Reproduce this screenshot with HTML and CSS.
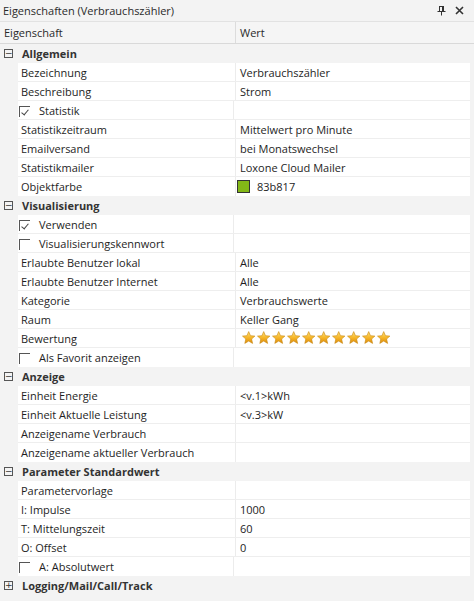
FILE: index.html
```html
<!DOCTYPE html>
<html lang="de">
<head>
<meta charset="utf-8">
<title>Eigenschaften</title>
<link rel="stylesheet" href="styles.css">
</head>
<body>
<div class="panel">
  <div class="titlebar">
    <span class="title">Eigenschaften (Verbrauchszähler)</span>
    <span class="tools">
      <svg class="pin" width="9" height="10" viewBox="0 0 9 10"><path d="M2 0.5h5M2.5 0.5v5M6.5 0.5v5M5.5 0.5v5M0.5 5.5h8M4.5 5.5v4" stroke="#333" stroke-width="1" fill="none"/></svg>
      <svg class="close" width="9" height="9" viewBox="0 0 9 9"><path d="M1 1l7 7M8 1l-7 7" stroke="#333" stroke-width="1.6" fill="none"/></svg>
    </span>
  </div>
  <div class="header">
    <div class="hcell hname">Eigenschaft</div>
    <div class="hcell hval">Wert</div>
  </div>
  <div class="grid">
    <div class="group"><span class="tog">−</span><span class="gname">Allgemein</span></div>
    <div class="row"><div class="name">Bezeichnung</div><div class="val">Verbrauchszähler</div></div>
    <div class="row"><div class="name">Beschreibung</div><div class="val">Strom</div></div>
    <div class="row"><div class="name chk"><span class="cb on"></span>Statistik</div><div class="val"></div></div>
    <div class="row"><div class="name">Statistikzeitraum</div><div class="val">Mittelwert pro Minute</div></div>
    <div class="row"><div class="name">Emailversand</div><div class="val">bei Monatswechsel</div></div>
    <div class="row"><div class="name">Statistikmailer</div><div class="val">Loxone Cloud Mailer</div></div>
    <div class="row"><div class="name">Objektfarbe</div><div class="val"><span class="swatch"></span>83b817</div></div>

    <div class="group"><span class="tog">−</span><span class="gname">Visualisierung</span></div>
    <div class="row"><div class="name chk"><span class="cb on"></span>Verwenden</div><div class="val"></div></div>
    <div class="row"><div class="name chk"><span class="cb"></span>Visualisierungskennwort</div><div class="val"></div></div>
    <div class="row"><div class="name">Erlaubte Benutzer lokal</div><div class="val">Alle</div></div>
    <div class="row"><div class="name">Erlaubte Benutzer Internet</div><div class="val">Alle</div></div>
    <div class="row"><div class="name">Kategorie</div><div class="val">Verbrauchswerte</div></div>
    <div class="row"><div class="name">Raum</div><div class="val">Keller Gang</div></div>
    <div class="row"><div class="name">Bewertung</div><div class="val stars">
      <svg width="152" height="14" viewBox="0 0 152 14">
        <defs>
          <linearGradient id="g" x1="0" y1="0" x2="0" y2="1">
            <stop offset="0" stop-color="#ffe27a"/>
            <stop offset="0.55" stop-color="#f5b324"/>
            <stop offset="1" stop-color="#d98a10"/>
          </linearGradient>
          <path id="s" d="M6.7 0.6l1.8 4.1 4.4 0.4-3.3 2.9 1 4.4-3.9-2.3-3.9 2.3 1-4.4-3.3-2.9 4.4-0.4z" fill="url(#g)" stroke="#c8860e" stroke-width="0.6"/>
        </defs>
        <use href="#s" x="0"/><use href="#s" x="15"/><use href="#s" x="30"/><use href="#s" x="45"/><use href="#s" x="60"/><use href="#s" x="75"/><use href="#s" x="90"/><use href="#s" x="105"/><use href="#s" x="120"/><use href="#s" x="135"/>
      </svg>
    </div></div>
    <div class="row"><div class="name chk"><span class="cb"></span>Als Favorit anzeigen</div><div class="val"></div></div>

    <div class="group"><span class="tog">−</span><span class="gname">Anzeige</span></div>
    <div class="row"><div class="name">Einheit Energie</div><div class="val">&lt;v.1&gt;kWh</div></div>
    <div class="row"><div class="name">Einheit Aktuelle Leistung</div><div class="val">&lt;v.3&gt;kW</div></div>
    <div class="row"><div class="name">Anzeigename Verbrauch</div><div class="val"></div></div>
    <div class="row"><div class="name">Anzeigename aktueller Verbrauch</div><div class="val"></div></div>

    <div class="group"><span class="tog">−</span><span class="gname">Parameter Standardwert</span></div>
    <div class="row"><div class="name">Parametervorlage</div><div class="val"></div></div>
    <div class="row"><div class="name">I: Impulse</div><div class="val">1000</div></div>
    <div class="row"><div class="name">T: Mittelungszeit</div><div class="val">60</div></div>
    <div class="row"><div class="name">O: Offset</div><div class="val">0</div></div>
    <div class="row"><div class="name chk"><span class="cb"></span>A: Absolutwert</div><div class="val"></div></div>

    <div class="group"><span class="tog">+</span><span class="gname">Logging/Mail/Call/Track</span></div>
  </div>
</div>
</body>
</html>
```
FILE: styles.css
```css
html, body {
  margin: 0;
  padding: 0;
  background: #f3f3f3;
}
.panel {
  width: 474px;
  height: 601px;
  overflow: hidden;
  font-family: "Open Sans", "Noto Sans", sans-serif;
  font-size: 11px;
  color: #1e1e1e;
  background: #f3f3f3;
}
.titlebar {
  height: 21px;
  display: flex;
  align-items: center;
  justify-content: space-between;
  padding: 0 10px 0 3px;
  border-bottom: 1px solid #e2e2e2;
}
.title {
  color: #2a2a2a;
}
.tools {
  display: flex;
  align-items: center;
  gap: 9px;
}
.header {
  height: 21px;
  display: flex;
  border-bottom: 1px solid #d9d9d9;
  background: #f5f5f5;
}
.hcell {
  display: flex;
  align-items: center;
  color: #2a2a2a;
}
.hname {
  width: 231px;
  padding-left: 4px;
  border-right: 1px solid #dcdcdc;
}
.hval {
  padding-left: 4px;
}
.grid {
  display: flex;
  flex-direction: column;
}
.group {
  height: 19px;
  display: flex;
  align-items: center;
  background: #f3f3f3;
}
.tog {
  width: 7px;
  height: 7px;
  border: 1px solid #555;
  margin-left: 4px;
  margin-right: 9px;
  font-size: 9px;
  line-height: 7px;
  text-align: center;
  color: #333;
  font-family: "DejaVu Sans", sans-serif;
  overflow: hidden;
}
.gname {
  font-weight: bold;
  color: #333;
}
.row {
  height: 19px;
  display: flex;
  margin-left: 18px;
  margin-right: 4px;
  background: #fff;
  box-sizing: border-box;
  border-bottom: 1px solid #eeeeee;
}
.row:has(+ .group) {
  border-bottom: none;
}
.name {
  width: 214px;
  padding-left: 3px;
  display: flex;
  align-items: center;
  border-right: 1px solid #ececec;
  white-space: nowrap;
  overflow: hidden;
}
.val {
  flex: 1;
  padding-left: 4px;
  display: flex;
  align-items: center;
  white-space: nowrap;
}
.chk {
  padding-left: 1px;
}
.cb {
  width: 10px;
  height: 10px;
  border-top: 1px solid #555;
  border-left: 1px solid #555;
  margin-right: 9px;
  margin-top: 2px;
  position: relative;
}
.cb.on::after {
  content: "";
  position: absolute;
  left: 3px;
  top: 1px;
  width: 3px;
  height: 6px;
  border-right: 1px solid #444;
  border-bottom: 1px solid #444;
  transform: rotate(40deg);
}
.swatch {
  width: 11px;
  height: 11px;
  background: #83b817;
  border: 1px solid #333;
  margin-left: -3px;
  margin-right: 7px;
}
.stars {
  padding-left: 6px;
}
.stars svg {
  display: block;
}
```
